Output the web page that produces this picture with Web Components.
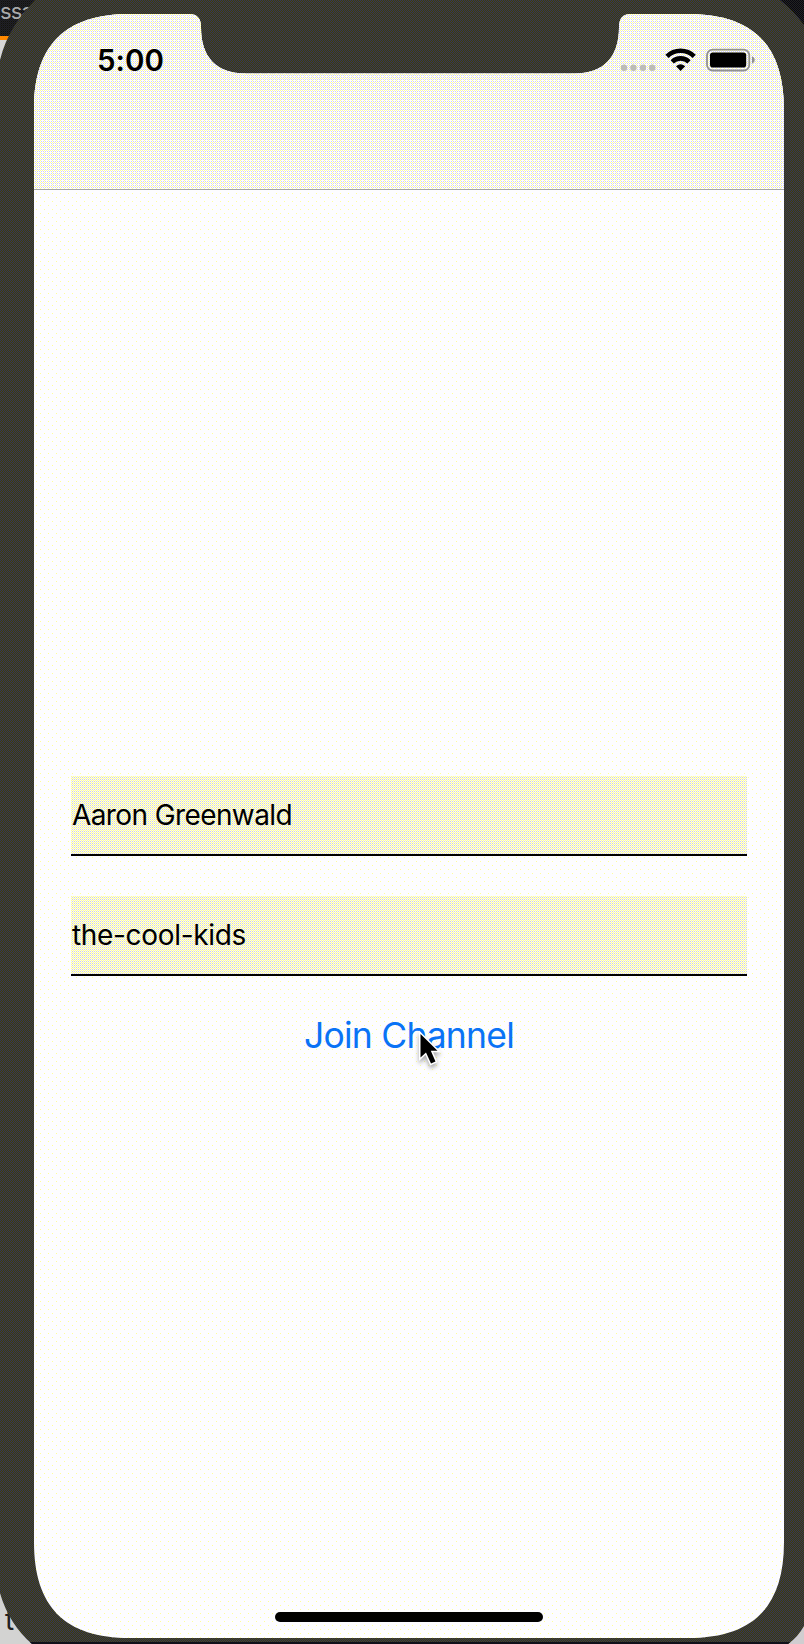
<!DOCTYPE html>
<html lang="en">
<head>
<meta charset="utf-8">
<title>Join Channel</title>
<style>
html,body{margin:0;padding:0}
body{width:804px;height:1644px;overflow:hidden;font-family:Inter,"Liberation Sans",sans-serif;color:#000}
</style>
</head>
<body>
<phone-frame>
  <status-bar slot="screen" time="5:00"></status-bar>
  <join-form slot="screen">
    <text-field><fit-text width="220">Aaron Greenwald</fit-text></text-field>
    <text-field><fit-text width="174">the-cool-kids</fit-text></text-field>
    <link-button><fit-text width="210">Join Channel</fit-text></link-button>
  </join-form>
  <home-bar slot="screen"></home-bar>
</phone-frame>
<script>
const define = (name, html, setup) => customElements.define(name, class extends HTMLElement {
  constructor() {
    super();
    this.attachShadow({mode: 'open'}).innerHTML = html;
  }
  connectedCallback() { if (setup) setup(this, this.shadowRoot); }
});

define('backdrop-windows', `
<style>
:host{position:absolute;inset:0;overflow:hidden;font:22px/22px Inter,sans-serif}
.tl{position:absolute;left:0;top:0;width:60px;height:70px;background:#d8d8d8}
.title{height:36px;background:conic-gradient(#222 25%,#101010 0 50%,#222 0 75%,#181820 0) 0 0/2px 2px;color:#aaa;border-bottom:4px solid #f80;box-sizing:content-box}
.title span{display:block;letter-spacing:-.8px}
.tr{position:absolute;right:0;top:0;width:30px;height:40px;background:conic-gradient(#222 25%,#080810 0 50%,#222 0 75%,#080810 0) 0 0/2px 2px}
.bl{position:absolute;left:0;bottom:0;width:50px;height:70px;background:#d3d3d2;box-sizing:border-box;padding:32px 0 0 5px;font-size:28px;line-height:28px;color:#222}
.br{position:absolute;right:0;bottom:0;width:30px;height:40px;background:#d0cdd0}
</style>
<div class="tl"><div class="title"><span>ssa</span></div></div><div class="tr"></div>
<div class="bl">t</div><div class="br"></div>`);

define('phone-frame', `
<style>
:host{display:block;position:relative;width:804px;height:1644px;overflow:hidden}
.body{position:relative;box-sizing:border-box;width:804px;height:1644px;padding:14px 20px 6px 34px;
 background:conic-gradient(#404004 25%,#33335e 0 50%,#404004 0 75%,#33335e 0) 0 0/2px 2px;
 clip-path:path("M35 0 C19 17 6 35 0 60 V1593 C6 1614 17 1631 32 1644 H788 Q798 1637 804 1626 V25 Q794 11 780 0Z")}
.screen{display:flex;flex-direction:column;width:750px;height:1624px;
 background:
  conic-gradient(from 270deg at 1px 1px,#ffff99 90deg,transparent 0) 2px 3px/8px 8px,
  conic-gradient(from 270deg at 1px 1px,#ffff99 90deg,transparent 0) 6px 7px/8px 8px,#fdfdff;
 clip-path:path("M0 96 C0 31 31 0 96 0 H155 Q167 0 167 13 C167 43 182 59.5 212 59.5 H540 C570 59.5 585 43 585 13 Q585 0 597 0 H654 C719 0 750 31 750 96 V1528 C750 1593 719 1624 654 1624 H96 C31 1624 0 1593 0 1528Z")}
.edge{position:absolute;left:0;right:0;bottom:0;height:2px;background:#11111a}
</style>
<backdrop-windows></backdrop-windows>
<div class="body"><div class="screen"><slot name="screen"></slot></div><div class="edge"></div></div>`);

define('status-bar', `
<style>
:host{display:flex;flex:none;box-sizing:border-box;height:176px;border-bottom:1px solid #a6a6a8;padding:30px 29px 0 63px;justify-content:space-between;align-items:flex-start;
 background:
  conic-gradient(from 270deg at 1px 1px,#ffff99 90deg,transparent 0) 0 0/4px 4px,
  conic-gradient(from 270deg at 1px 1px,#ffff99 90deg,transparent 0) 2px 2px/4px 4px,
  conic-gradient(from 270deg at 1px 1px,#ffff99 90deg,transparent 0) 2px 0/4px 4px,
  conic-gradient(from 270deg at 1px 1px,#d0d0f8 90deg,transparent 0) 1px 1px/2px 2px,#fff}
fit-text{font-size:29.5px;line-height:32px;font-weight:600}
svg{display:block}
</style>
<fit-text width="67">5:00</fit-text>
<svg width="135" height="32" viewBox="620 44 135 32">
 <g fill="#bdbdb8"><circle cx="624" cy="67.7" r="3.2"/><circle cx="633.4" cy="67.7" r="3.2"/><circle cx="643" cy="67.7" r="3.2"/><circle cx="652.2" cy="67.7" r="3.2"/></g>
 <g fill="none" stroke="#000" stroke-width="4.6"><path d="M667 56.3 A19.5 19.5 0 0 1 694.2 56.3"/><path d="M672.2 61.8 A12 12 0 0 1 689 61.8"/></g>
 <path d="M676 66.3 Q680.6 62 685.2 66.3 L680.6 71Z"/>
 <rect x="707" y="49.7" width="42.3" height="20.8" rx="5.8" fill="none" stroke="#929290" stroke-width="1.8"/>
 <rect x="710" y="52.4" width="36.2" height="15.2" rx="2.8"/>
 <path d="M752 56.3 Q754.8 57.4 754.8 60 Q754.8 62.7 752 63.8Z" fill="#929290"/>
</svg>`, (el, root) => { root.querySelector('fit-text').textContent = el.getAttribute('time'); });

define('text-field', `
<style>
:host{display:flex;align-items:center;box-sizing:border-box;height:80px;padding:0 0 0 1px;border-bottom:2px solid #000;font-size:28px;line-height:36px;
 background:
  conic-gradient(from 270deg at 1px 1px,#ffff99 90deg,transparent 0) 0 0/2px 2px,
  conic-gradient(from 270deg at 1px 1px,#ccccff 90deg,transparent 0) 1px 1px/4px 4px,
  conic-gradient(from 270deg at 1px 1px,#ccccff 90deg,transparent 0) 3px 3px/4px 4px,
  conic-gradient(from 270deg at 1px 1px,#d4d4d4 90deg,transparent 0) 1px 1px/2px 2px,#ffffe4}
</style><slot></slot>`);

define('mouse-pointer', `
<style>:host{display:block;position:absolute;left:115px;top:18px}svg{display:block;overflow:visible;filter:drop-shadow(0 3px 2px #0005)}</style>
<svg width="24" height="36" viewBox="0 0 24 36"><path d="M1.5 2 V25.5 L7 20.5 L12 31.5 L16.5 29.5 L11.8 18.7 H18.5Z" fill="#000" stroke="#fff" stroke-width="3" paint-order="stroke"/></svg>`);

define('link-button', `
<style>:host{display:block;position:relative;align-self:center;margin-top:-2px;color:#0a73f5;font-size:35.5px;line-height:44px}</style>
<slot></slot><mouse-pointer></mouse-pointer>`);

define('join-form', `
<style>:host{display:flex;flex:1;flex-direction:column;gap:40px;padding:586px 37px 0}</style><slot></slot>`);

define('home-bar', `
<style>:host{display:block;flex:none;align-self:center;width:268px;height:10px;border-radius:5px;background:#000;margin-bottom:16px}</style>`);

// Spreads its text over a given advance width. Defined last, so that the
// fonts its ancestors set already apply when it is measured.
define('fit-text', `
<style>:host{display:inline-block;white-space:nowrap}</style><slot></slot>`, el => {
  const goal = +el.getAttribute('width');
  const n = el.textContent.length;
  el.style.letterSpacing = (goal - el.getBoundingClientRect().width) / n + 'px';
});
</script>
</body>
</html>
